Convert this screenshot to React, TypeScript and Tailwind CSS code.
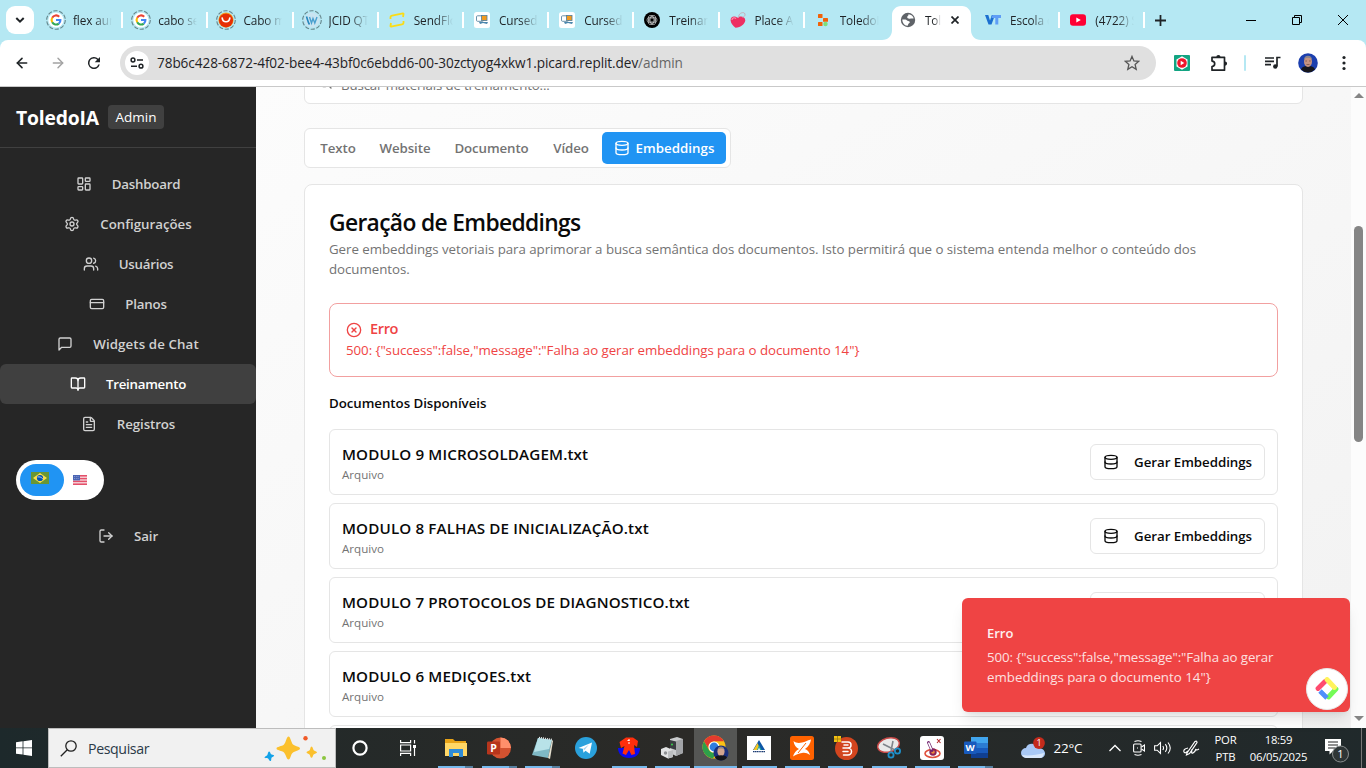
import React from "react";
import {
  LayoutDashboard, Settings, Users, CreditCard, BookOpen, FileText, LogOut, Database, CircleX, Search,
  ArrowLeft, ArrowRight,
} from "lucide-react";

type IconProps = { className?: string };

/* ---------- favicons ---------- */

function Ring({ children }: { children: React.ReactNode }) {
  return (
    <svg viewBox="0 0 20 20" className="h-5 w-5">
      <circle cx="10" cy="10" r="9.3" fill="none" stroke="#66868c" strokeWidth="1.1" strokeDasharray="4.2 1.64" />
      {children}
    </svg>
  );
}

function GoogleIcon() {
  return (
    <Ring>
      <circle cx="10" cy="10" r="7.6" fill="#fff" />
      <g fill="none" strokeWidth="2.1">
        <path d="M13.2 6.7A4.4 4.4 0 0 0 6.2 7.8" stroke="#ea4335" />
        <path d="M6.2 7.8a4.4 4.4 0 0 0 0 4.4" stroke="#fbbc05" />
        <path d="M6.2 12.2a4.4 4.4 0 0 0 6.6 1.4" stroke="#34a853" />
        <path d="M12.8 13.6A4.4 4.4 0 0 0 14.4 10H10" stroke="#4285f4" />
      </g>
    </Ring>
  );
}

function AliIcon() {
  return (
    <Ring>
      <circle cx="10" cy="10" r="7.6" fill="#f5a623" />
      <circle cx="10" cy="10.4" r="7" fill="#e62e04" />
      <path d="M6.2 8c.6 5 7 5 7.600 0" fill="none" stroke="#fff" strokeWidth="1.700" strokeLinecap="round" />
    </Ring>
  );
}

function WpIcon() {
  return (
    <Ring>
      <circle cx="10" cy="10" r="7.500" fill="#c9e4f1" />
      <path d="M4.500 6.500c1 3 1.500 6 3 8" fill="none" stroke="#2387bd" strokeWidth="1.600" />
      <path d="M7.500 7l2 6 1.500-4.500 1.800 4.500L15 7" fill="none" stroke="#4aa0cf" strokeWidth="1.400" />
    </Ring>
  );
}

function SendIcon() {
  return (
    <svg viewBox="0 0 18 18" className="h-[18px] w-[18px]">
      <path d="M2.500 8V6q0-1 1.500-1.300L15 2.300q.7 0 .5 1L15 6M15.500 10v2q0 1-1.500 1.300L3 15.700q-.7 0-.5-1L3 12" fill="none" stroke="#fbdc15" strokeWidth="1.800" strokeLinejoin="round" />
    </svg>
  );
}

function CursedIcon() {
  return (
    <svg viewBox="0 0 16 16" className="h-4 w-4">
      <rect width="16" height="16" rx="2.5" fill="#fff" />
      <rect x="2.500" y="3.800" width="7" height="5.500" rx="1" fill="#fff" stroke="#5a86a3" strokeWidth=".9" />
      <rect x="7.500" y="3.500" width="5.500" height="5" fill="#f29a1f" stroke="#4f7d9c" strokeWidth=".8" />
      <path d="M5 10h9l-1 2-4-1-3 1z" fill="#4b86ad" />
    </svg>
  );
}

function GptIcon() {
  return (
    <svg viewBox="0 0 16 16" className="h-4 w-4">
      <circle cx="8" cy="8" r="8" fill="#000" />
      <g fill="none" stroke="#fff" strokeWidth=".55">
        <ellipse cx="8" cy="8" rx="5" ry="2.900" />
        <ellipse cx="8" cy="8" rx="5" ry="2.900" transform="rotate(60 8 8)" />
        <ellipse cx="8" cy="8" rx="5" ry="2.900" transform="rotate(120 8 8)" />
        <path d="M8 5.800l2 1.100v2.200l-2 1.100-2-1.100V6.900z" />
      </g>
    </svg>
  );
}

function HeartIcon() {
  return (
    <svg viewBox="0 0 16 16" className="h-4 w-4">
      <path d="M.6 8.500C.3 4.500 4.500 3.200 7.500 5.800c2.500-2.300 8-1.300 7.800 2.700C14.800 12 11 15.500 5.500 15.800 3 14 1 11.500.6 8.500z" fill="#ee2f62" />
      <path d="M2 8c0-2 2-3 4-1.500" fill="none" stroke="#ff90ad" strokeWidth="1.200" />
      <path d="M8.500 6C8 1 14-1 15 2c.5 2-1.500 3-2.500 3.500" fill="none" stroke="#c9a5b3" strokeWidth=".9" />
    </svg>
  );
}

function ToledoIcon() {
  return (
    <svg viewBox="0 0 16 16" className="h-4 w-4">
      <g fill="#f26207">
        <rect x="3" y="2" width="4.500" height="4" rx=".6" />
        <rect x="8" y="6" width="5" height="3.800" rx=".6" />
        <rect x="3" y="10" width="4.500" height="4" rx=".6" />
      </g>
      <circle cx="10.500" cy="12" r="2.200" fill="#7ce07c" />
    </svg>
  );
}

function GlobeIcon() {
  return (
    <svg viewBox="0 0 16 16" className="h-4 w-4">
      <circle cx="8" cy="8" r="7.200" fill="#5f6368" />
      <path d="M2.300 7.500h3c1.500 0 1.500 1.500 3 1.500 2 .2 2 1.800.5 2.500-1 .5-.5 2-1.500 2.300-3-.3-5-3-5-6.300zM8.500 2.200c2.800.2 4.500 1.800 5.200 4-1 .8-2 0-3 .3C9 7 7 6.500 7.200 5c.2-1.200 1.500-1.300 1.300-2.800z" fill="#fff" />
    </svg>
  );
}

function VtIcon() {
  return (
    <svg viewBox="0 0 16 16" className="h-4 w-4">
      <path d="M0 3h3.300L5 8.500 6.800 3H10L6.500 12.500H3.500z" fill="#1b6fd0" />
      <path d="M7.500 3H16v3h-2.700v6.500h-3V6H6.400z" fill="#5f9df5" />
    </svg>
  );
}

function YoutubeIcon() {
  return (
    <svg viewBox="0 0 16 16" className="h-4 w-4">
      <rect y="2.200" width="16" height="11.600" rx="3" fill="#ff0033" />
      <path d="M6.300 5.400v5.200L10.800 8z" fill="#fff" />
    </svg>
  );
}

/* ---------- browser chrome ---------- */

type Tab = { label: string; icon: React.ReactNode; sep?: boolean; active?: boolean };

const tabs: Tab[] = [
  { label: "flex aurora", icon: <GoogleIcon />, sep: true },
  { label: "cabo serial", icon: <GoogleIcon />, sep: true },
  { label: "Cabo micro", icon: <AliIcon />, sep: true },
  { label: "JCID QT30", icon: <WpIcon />, sep: true },
  { label: "SendFlow", icon: <SendIcon />, sep: true },
  { label: "Curseduca", icon: <CursedIcon />, sep: true },
  { label: "Curseduca", icon: <CursedIcon />, sep: true },
  { label: "Treinamento", icon: <GptIcon />, sep: true },
  { label: "Place An", icon: <HeartIcon />, sep: true },
  { label: "ToledoIA", icon: <ToledoIcon /> },
  { label: "ToledoIA", icon: <GlobeIcon />, active: true },
  { label: "Escola de", icon: <VtIcon />, sep: true },
  { label: "(4722) Se", icon: <YoutubeIcon />, sep: true },
];

function TabItem({ tab }: { tab: Tab }) {
  return (
    <div className="relative flex h-10 w-[85.2px] shrink-0 items-center">
      {tab.active && (
        <svg viewBox="0 0 99 34" className="absolute -left-[8px] top-[6px] h-[34px] w-[99px]">
          <path d="M0 34c6 0 10-4 10-10V9c0-5 4-9 9-9h61c5 0 9 4 9 9v15c0 6 4 10 10 10z" fill="#fff" />
        </svg>
      )}
      <span className="relative ml-[6px] flex w-6 shrink-0 items-center justify-center">{tab.icon}</span>
      <span
        className={
          "relative ml-[5px] mt-px overflow-hidden whitespace-nowrap text-[11.8px] tracking-[-0.1px] text-[#1f2326] [mask-image:linear-gradient(to_right,#000_55%,transparent)] " +
          (tab.active ? "w-4" : "w-[39px]")
        }
      >
        {tab.label}
      </span>
      {tab.active && (
        <svg viewBox="0 0 8 8" className="relative ml-[10px] h-2 w-2">
          <path d="M.5.5l7 7M7.500.5l-7 7" stroke="#1f2326" strokeWidth="1.700" />
        </svg>
      )}
      {tab.sep && <span className="absolute right-0 top-3 h-4 w-[2px] bg-white" />}
    </div>
  );
}

function TabStrip() {
  return (
    <div className="flex h-10 shrink-0 items-center bg-[#b5e8f3]">
      <div className="ml-[6px] mr-1 flex h-7 w-7 items-center justify-center rounded-[9px] bg-white">
        <svg viewBox="0 0 10 6" className="h-[6px] w-[10px]">
          <path d="M1.300 1L5 4.600 8.700 1" fill="none" stroke="#1f2326" strokeWidth="2" />
        </svg>
      </div>
      {tabs.map((t, i) => (
        <TabItem key={i} tab={t} />
      ))}
      <svg viewBox="0 0 10 10" className="ml-[10px] h-[11px] w-[11px]">
        <path d="M5 0v10M0 5h10" stroke="#1f2326" strokeWidth="1.600" />
      </svg>
      <div className="ml-auto flex">
        <span className="flex w-[46px] items-center justify-center">
          <svg viewBox="0 0 10 10" className="h-[10px] w-[10px]"><path d="M0 5.500h10" stroke="#000" /></svg>
        </span>
        <span className="flex w-[46px] items-center justify-center">
          <svg viewBox="0 0 10 10" className="h-[10px] w-[10px]"><path d="M.5 2.500h7v7h-7zM2.500 2.500v-2h7v7h-2" fill="none" stroke="#000" /></svg>
        </span>
        <span className="flex w-[46px] items-center justify-center">
          <svg viewBox="0 0 10 10" className="h-[10px] w-[10px]"><path d="M0 0l10 10M10 0L0 10" stroke="#000" /></svg>
        </span>
      </div>
    </div>
  );
}

function Toolbar() {
  return (
    <div className="bg-[#b5e8f3]">
      <div className="flex h-[47px] items-center rounded-t-[8px] border-b border-[#c9c9c9] bg-white">
        <ArrowLeft className="ml-[14px] h-4 w-4 text-[#1f2326]" strokeWidth={2.4} />
        <ArrowRight className="ml-5 h-4 w-4 text-[#a3a3a3]" strokeWidth={2.2} />
        <svg viewBox="0 0 24 24" className="ml-[19px] h-[18px] w-[18px]">
          <path d="M17.650 6.350A8 8 0 1 0 19.730 14h-2.080A6 6 0 1 1 12 6c1.660 0 3.140.69 4.220 1.780L13 11h7V4z" fill="#1f2326" />
        </svg>
        <div className="ml-[17px] flex h-[34px] w-[1036px] items-center rounded-full bg-[#e0e0e0] pl-[5px]">
          <span className="flex h-6 w-6 items-center justify-center rounded-full bg-white">
            <svg viewBox="0 0 14 12" className="h-3 w-[14px]" fill="none" stroke="#1f2326" strokeWidth="1.500">
              <circle cx="3" cy="3" r="1.900" />
              <path d="M7 3h6M1 9.200h6" />
              <circle cx="11" cy="9.200" r="1.900" />
            </svg>
          </span>
          <span className="ml-2 whitespace-nowrap text-[13.6px] leading-5 tracking-[-0.08px] text-[#1f2326]">
            78b6c428-6872-4f02-bee4-43bf0c6ebdd6-00-30zctyog4xkw1.picard.replit.dev<span className="text-[#666]">/admin</span>
          </span>
          <svg viewBox="0 0 16 16" className="ml-auto mr-4 h-4 w-4">
            <path d="M8 1.400l1.900 4.500 4.900.4-3.700 3.200 1.100 4.800L8 11.700l-4.200 2.600 1.100-4.800L1.200 6.300l4.900-.4z" fill="none" stroke="#555" strokeWidth="1.300" />
          </svg>
        </div>
        <svg viewBox="0 0 16 16" className="ml-[18px] h-4 w-4">
          <rect width="16" height="16" rx="1" fill="#12a482" />
          <path d="M8 1.300l5.500 3.200v7L8 14.700 2.500 11.500v-7z" fill="#fff" />
          <circle cx="8" cy="8" r="4.800" fill="#f0152c" />
          <path d="M6.700 5.700v4.600L10.300 8z" fill="#fff" />
        </svg>
        <svg viewBox="0 0 18 18" className="ml-5 h-[18px] w-[18px]">
          <path d="M2 3.300h12.500v12.900H2v-3.700c3.600-.3 3.600-5.100 0-5.400z" fill="none" stroke="#1f2326" strokeWidth="1.700" strokeLinejoin="round" />
          <path d="M6.300 3a2.100 2.100 0 0 1 4.200 0zM15 7.500a2.100 2.100 0 0 1 0 4.200z" fill="#1f2326" />
        </svg>
        <span className="ml-4 h-4 w-[2px] rounded bg-[#b5e8f3]" />
        <svg viewBox="0 0 16 14" className="ml-[19px] h-[14px] w-4" fill="none" stroke="#1f2326" strokeWidth="1.700">
          <path d="M0 2h9M0 5.300h9M0 8.600h6M12 10.500V1.500h3.500" />
          <circle cx="10.300" cy="10.500" r="2.200" fill="#1f2326" stroke="none" />
        </svg>
        <svg viewBox="0 0 20 20" className="ml-[17px] h-5 w-5">
          <circle cx="10" cy="10" r="9.800" fill="#1c3fae" />
          <path d="M3 16.500c1-3 4-3.500 7-3.500s6 .5 7 3.500a9.800 9.800 0 0 1-14 0z" fill="#16161c" />
          <ellipse cx="10" cy="8.500" rx="4" ry="5.400" fill="#c69380" />
          <path d="M5.800 7C5.800 1.300 14.200 1.300 14.200 7 13 4 7 4 5.800 7z" fill="#8b858c" />
          <path d="M7.300 8h1.700M11 8h1.700M8.500 11.500h3" stroke="#6b4a42" strokeWidth=".7" />
        </svg>
        <svg viewBox="0 0 4 16" className="ml-6 h-4 w-1" fill="#1f2326">
          <circle cx="2" cy="2.500" r="1.600" /><circle cx="2" cy="8" r="1.600" /><circle cx="2" cy="13.500" r="1.600" />
        </svg>
      </div>
    </div>
  );
}

/* ---------- sidebar ---------- */

function MessageIcon({ className }: IconProps) {
  return (
    <svg viewBox="0 0 24 24" className={className} fill="none" stroke="currentColor" strokeWidth="2" strokeLinecap="round" strokeLinejoin="round">
      <path d="M21 15a2 2 0 0 1-2 2H7l-4 4V5a2 2 0 0 1 2-2h14a2 2 0 0 1 2 2z" />
    </svg>
  );
}

type Nav = { label: string; Icon: React.ComponentType<IconProps>; tracking: string; active?: boolean };

const navItems: Nav[] = [
  { label: "Dashboard", Icon: LayoutDashboard, tracking: "tracking-[-0.2px]" },
  { label: "Configurações", Icon: Settings, tracking: "tracking-[-0.02px]" },
  { label: "Usuários", Icon: Users, tracking: "tracking-[-0.25px]" },
  { label: "Planos", Icon: CreditCard, tracking: "tracking-[-0.2px]" },
  { label: "Widgets de Chat", Icon: MessageIcon, tracking: "tracking-[0.1px]" },
  { label: "Treinamento", Icon: BookOpen, tracking: "tracking-[-0.25px]", active: true },
  { label: "Registros", Icon: FileText, tracking: "tracking-[-0.1px]" },
];

function NavItem({ label, Icon, tracking, active }: Nav) {
  return (
    <div
      className={
        "flex h-10 items-center justify-center gap-5 rounded-md text-[13.3px] font-semibold " +
        (active ? "bg-[#404040] text-white" : "text-[#d1d1d1]")
      }
    >
      <Icon className="h-4 w-4" />
      <span className={"whitespace-nowrap pt-px " + tracking}>{label}</span>
    </div>
  );
}

function Sidebar() {
  return (
    <aside className="flex w-64 shrink-0 flex-col bg-[#262626]">
      <div className="flex h-[61px] items-center border-b border-[#404040] pl-4">
        <span className="w-[92px] pt-px text-[19.300px] font-bold leading-7 tracking-[-0.15px] text-white">ToledoIA</span>
        <span className="flex h-6 w-14 items-center justify-center rounded bg-[#404040] pt-px text-[13.5px] text-white">Admin</span>
      </div>
      <nav className="mt-4">
        {navItems.map((n) => (
          <NavItem key={n.label} {...n} />
        ))}
      </nav>
      <div className="ml-4 mt-4 flex h-10 w-[88px] items-center rounded-full bg-white p-1">
        <span className="flex h-8 w-11 items-start justify-center rounded-full bg-[#2094f3] pr-1 pt-2">
          <svg viewBox="0 0 18 12" className="h-3 w-[18px]">
            <rect width="18" height="12" fill="#699635" />
            <path d="M9 1l7 5-7 5-7-5z" fill="#ffe04b" />
            <circle cx="9" cy="6" r="3.100" fill="#0052b4" />
            <path d="M6.500 5c2-.5 4 .2 5.200 1.800" fill="none" stroke="#f0f0f0" strokeWidth=".8" />
          </svg>
        </span>
        <svg viewBox="0 0 14 10" className="ml-[9px] h-[10px] w-[14px]">
          <rect width="14" height="10" fill="#f4c9d0" />
          <path d="M0 .8h14M0 3.600h14M0 6.400h14M0 9.200h14" stroke="#e4506a" strokeWidth="1.400" />
          <rect width="7" height="5.400" fill="#4a64b4" />
          <path d="M1 1.500h5M1 3.500h5" stroke="#9badd8" strokeWidth=".7" strokeDasharray="1 .8" />
        </svg>
      </div>
      <div className="mt-4">
        <NavItem label="Sair" Icon={LogOut} tracking="tracking-[-0.1px]" />
      </div>
    </aside>
  );
}

/* ---------- page ---------- */

const documents = [
  "MODULO 9 MICROSOLDAGEM.txt",
  "MODULO 8 FALHAS DE INICIALIZAÇÃO.txt",
  "MODULO 7 PROTOCOLOS DE DIAGNOSTICO.txt",
  "MODULO 6 MEDIÇOES.txt",
  "MODULO 5 ELETRONICA.txt",
];

const errorMessage = '500: {"success":false,"message":"Falha ao gerar embeddings para o documento 14"}';

function DocumentRow({ name }: { name: string }) {
  return (
    <div className="flex h-[66px] shrink-0 items-center justify-between rounded-md border border-[#e5e5e5] px-3">
      <div>
        <div className="text-[15.2px] font-semibold leading-6 tracking-[0.13px] text-[#0a0a0a]">{name}</div>
        <div className="pt-px text-[11.6px] leading-[15px] text-[#737373]">Arquivo</div>
      </div>
      <div className="flex h-9 w-[175px] items-center justify-between rounded-md border border-[#e5e5e5] px-3 text-[13.3px] font-semibold tracking-[-0.04px] text-[#0a0a0a]">
        <Database className="h-4 w-4" />
        <span className="whitespace-nowrap pt-px">Gerar Embeddings</span>
      </div>
    </div>
  );
}

function Main() {
  return (
    <main className="flex min-w-0 flex-1 flex-col overflow-hidden bg-linear-to-br from-[#fcfcfc] to-[#f2f2f2] pl-12 pr-12">
      <div className="-mt-[23px] flex h-10 w-[999px] shrink-0 items-center gap-2 rounded-md border border-[#e5e5e5] bg-white pl-3 text-[13.300px] text-[#737373]">
        <Search className="mb-1 h-4 w-4" />
        <span className="pt-[3px] tracking-[-0.15px]">Buscar materiais de treinamento...</span>
      </div>
      <div className="mt-6 flex h-10 w-[427px] shrink-0 items-center rounded-md border border-[#e5e5e5] bg-white p-[3px] text-[13.300px] font-semibold tracking-[-0.1px] text-[#737373]">
        <span className="w-[60px] pt-px text-center">Texto</span>
        <span className="w-[74px] pt-px text-center">Website</span>
        <span className="w-[99px] pt-px text-center">Documento</span>
        <span className="w-[60px] pt-px text-center">Vídeo</span>
        <span className="ml-px flex h-8 w-[124px] items-center justify-center gap-[6px] whitespace-nowrap rounded-[5px] bg-[#2094f3] text-white">
          <Database className="h-4 w-4" />
          <span className="pt-px tracking-[0.02px]">Embeddings</span>
        </span>
      </div>
      <section className="mt-4 flex w-[999px] shrink-0 flex-col rounded-lg border border-[#e5e5e5] bg-white p-6">
        <h1 className="h-[30px] whitespace-nowrap text-[22.800px] font-semibold leading-[27px] tracking-[-0.65px] text-[#0a0a0a]">Geração de Embeddings</h1>
        <p className="w-[900px] text-[13.3px] leading-5 tracking-[-0.045px] text-[#737373]">
          Gere embeddings vetoriais para aprimorar a busca semântica dos documentos. Isto permitirá que o sistema entenda melhor o conteúdo dos
          <br />
          documentos.
        </p>
        <div className="mt-6 flex h-[74px] flex-col rounded-lg border border-[#f2a0a0] px-4 pt-[15px] text-[#ef4444]">
          <div className="flex h-5 items-center gap-2 text-[14.600px] font-semibold tracking-[-0.4px]">
            <CircleX className="mt-[2px] h-4 w-4" />
            <span className="-mt-px">Erro</span>
          </div>
          <div className="mt-px text-[13.300px] leading-5 tracking-[-0.06px]">{errorMessage}</div>
        </div>
        <h2 className="mt-4 text-[13.3px] font-semibold leading-5 tracking-[-0.05px] text-[#0a0a0a]">Documentos Disponíveis</h2>
        <div className="mt-4 flex flex-col gap-2">
          {documents.map((d) => (
            <DocumentRow key={d} name={d} />
          ))}
        </div>
      </section>
    </main>
  );
}

function Scrollbar() {
  return (
    <div className="flex w-[15px] shrink-0 flex-col items-center bg-[#fcfcfc]">
      <svg viewBox="0 0 10 5" className="mt-[6px] h-[5px] w-[10px]"><path d="M5 0l5 5H0z" fill="#858585" /></svg>
      <div className="mt-[128px] h-[216px] w-[9px] rounded-full bg-[#858585]" />
      <svg viewBox="0 0 10 5" className="mb-[7px] mt-auto h-[5px] w-[10px]"><path d="M0 0h10L5 5z" fill="#858585" /></svg>
    </div>
  );
}

function Toast() {
  return (
    <div className="absolute left-[962px] top-[598px] h-[114px] w-[388px] rounded-md bg-[#ef4444] px-[25px] pt-[25px] text-[13.3px] leading-5 text-[#fef0f0] shadow-lg">
      <div className="text-[13px] font-semibold">Erro</div>
      <div className="mt-1 text-[#fde0e0]">
        <span className="tracking-[-0.1px]">{'500: {"success":false,"message":"Falha ao gerar'}</span>
        <br />
        <span>{'embeddings para o documento 14"}'}</span>
      </div>
      <div className="absolute left-[344px] top-[70px] flex h-[42px] w-[42px] items-center justify-center rounded-full border border-[#e8e8e8] bg-white">
        <svg viewBox="0 0 24 24" className="h-6 w-6" fill="none" strokeWidth="4.800" strokeLinecap="round">
          <path d="M10 4.500L3 11.500" stroke="#ff4b6e" />
          <path d="M21 12l-7.500 8" stroke="#74fb57" />
          <path d="M5 14l7 7" stroke="#4f8ffb" strokeLinecap="butt" />
          <path d="M12 2.500l7.500 8" stroke="#fff35c" />
          <path d="M12 7l5 5-5 5-5-5z" fill="#fff" stroke="none" />
        </svg>
      </div>
    </div>
  );
}

/* ---------- taskbar ---------- */

function App32({ children }: { children: React.ReactNode }) {
  return <svg viewBox="0 0 24 24" className="h-6 w-6">{children}</svg>;
}

const apps: { icon: React.ReactNode; line?: boolean; multi?: boolean; active?: boolean }[] = [
  {
    line: true, multi: true,
    icon: <App32><path d="M1 3h8l2 2h11v15H1z" fill="#e8a317" /><path d="M1 7h22v13H1z" fill="#ffd766" /><path d="M5 13h14v8h-4v-4H9v4H5z" fill="#2f8bd6" /></App32>,
  },
  {
    line: true, multi: true,
    icon: <App32><circle cx="13.500" cy="12" r="10.500" fill="#d35230" /><path d="M13.500 1.500A10.500 10.500 0 0 1 24 12H13.500z" fill="#ff8f6b" /><rect y="5.500" width="13" height="13" rx="1.200" fill="#b7351c" /><text x="6.500" y="15.500" textAnchor="middle" fontSize="10.500" fontWeight="700" fill="#fff">P</text></App32>,
  },
  {
    line: true, multi: true,
    icon: <App32><path d="M8 2l14 2-4 18L2 19z" fill="#7fb9c6" /><path d="M8 2l14 2-3 9L4 16z" fill="#b8e2e8" /><path d="M22 4l1 1-3 18-2-1z" fill="#e4e0cf" /><path d="M9 1.500l13 2" stroke="#eee" strokeWidth="1.500" strokeDasharray="1 1" /></App32>,
  },
  {
    icon: <App32><circle cx="12" cy="12" r="11" fill="#2aa1dc" /><path d="M4.500 12L18 6.500l-2.300 11.300-4.200-3-2 2-.7-4z" fill="#fff" /><path d="M9 13l6-4.500-4.500 5.500z" fill="#a9d4ee" /></App32>,
  },
  {
    line: true,
    icon: <App32><path d="M1 12h22c0 6-4 10-11 10S1 18 1 12z" fill="#0b0bf0" /><path d="M9 1.500h7l5 3.500-1 6-3-2 1 9-3.500 1-2.500-5-3 5-3.500-1.500L7.500 10 4 12 2.500 6z" fill="#ff2e0c" /><path d="M12 3v6M10.500 4.500h3" stroke="#fff" strokeWidth="1" strokeDasharray="2 1" /></App32>,
  },
  {
    line: true,
    icon: <App32><path d="M10 3l7-2 6 2v14l-7 3-6-3z" fill="#c9cbcd" /><path d="M16 5l7-2v14l-7 3z" fill="#a2a4a7" /><path d="M10 4l6 1.500V14l-6-2z" fill="#3a3d42" /><circle cx="12" cy="8.500" r="1" fill="#38d24a" /><path d="M1 13l5-2 7 3v7l-5 1.500L1 19z" fill="#e2e3e4" /><circle cx="5.500" cy="17" r="1.700" fill="#8d8f92" /><path d="M8 15.500l5-1.500v7l-5 1.500z" fill="#bcbec0" /></App32>,
  },
  {
    line: true, active: true,
    icon: (
      <svg viewBox="0 0 27 26" className="h-[26px] w-[27px]">
        <circle cx="12" cy="12" r="11.500" fill="#fbc116" />
        <path d="M12 .5A11.500 11.500 0 0 1 22 6.300H12A6 6 0 0 0 6.500 14L2 6.300A11.500 11.500 0 0 1 12 .5z" fill="#e33b2e" />
        <path d="M2 6.300l5 8.700c1 2 4 3.500 7 2.500L11 23.500A11.500 11.500 0 0 1 2 6.300z" fill="#2da04a" />
        <circle cx="12" cy="12" r="5.500" fill="#fff" /><circle cx="12" cy="12" r="4.400" fill="#2f7de0" />
        <circle cx="19" cy="18" r="7.500" fill="#1b2f7c" /><ellipse cx="19" cy="16.500" rx="3.600" ry="4.800" fill="#d3a58e" />
        <path d="M13 22.500c1-3 11-3 12 0a7.500 7.500 0 0 1-12 0z" fill="#15161b" /><path d="M15.600 15c0-4.500 6.800-4.500 6.800 0-1-2-5.500-2-6.800 0z" fill="#8a848a" />
      </svg>
    ),
  },
  {
    line: true,
    icon: <App32><rect width="24" height="24" fill="#fff" /><path d="M12 4l6 10H6z" fill="#0d56a6" /><path d="M10.500 7l3 7H6.500z" fill="#f7c51f" /><path d="M12 9l2.500 5H10z" fill="#22a7a0" /><path d="M12 11.500l1 2.500h-2z" fill="#fff" /><path d="M6 15.700h12" stroke="#1b3b72" strokeWidth="1.300" strokeDasharray="1.400 .4" /></App32>,
  },
  {
    line: true,
    icon: <App32><rect width="24" height="24" rx="2.500" fill="#ff6200" /><path d="M3.500 5c3 2.500 6 2 8.500 1.500 3-.5 5-2 9-3-.5 4-2.500 7-6 9.500 3 1 4.500 3.500 5 6-3-2-5-2.500-8-2-3.500.5-6 1.500-9 3.500 1-3.500 3-6 6-7.500C6 11.500 4 9 3.500 5z" fill="#fff" /><path d="M16 7l-8 10" stroke="#ff6200" strokeWidth="1" /></App32>,
  },
  {
    line: true,
    icon: <App32><circle cx="12.500" cy="12.500" r="11.500" fill="#d2451e" /><path d="M8 6h6a3 3 0 0 1 0 6H9M14 12a3 3 0 0 1 0 7H9.500M10 9h4M9 15.500h5" fill="none" stroke="#fff" strokeWidth="1.500" strokeLinecap="round" /><path d="M0 0h7v6H0z" fill="#f5c211" /><path d="M3.500 0v6M0 3h7" stroke="#9a7a10" strokeWidth=".8" /></App32>,
  },
  {
    line: true,
    icon: <App32><ellipse cx="11.500" cy="9" rx="11" ry="7" fill="#e9e9e9" stroke="#c94a48" strokeWidth="1.500" transform="rotate(-15 11.500 9)" /><path d="M6 8l12 6M16 5l-2 10" stroke="#80858b" strokeWidth="1.600" /><circle cx="14" cy="19" r="2.600" fill="none" stroke="#1f8fc9" strokeWidth="1.800" /><circle cx="20.500" cy="15" r="2.600" fill="none" stroke="#1f8fc9" strokeWidth="1.800" /></App32>,
  },
  {
    line: true,
    icon: <App32><rect width="24" height="24" rx="3" fill="#fff" /><ellipse cx="12.500" cy="17.500" rx="7.500" ry="4" fill="none" stroke="#e0503c" strokeWidth="1.600" /><circle cx="13" cy="16" r="3.700" fill="#8a2358" /><circle cx="13" cy="16" r="1.800" fill="#f08a3c" /><path d="M8.500 6.500l3.500 8" stroke="#70206d" strokeWidth="3" strokeLinecap="round" /><path d="M8.500 6.500l3 7" stroke="#fff" strokeWidth="1.600" /><path d="M17 3l3.500 4M20.500 3L17 7" stroke="#b3262a" strokeWidth="1.100" /></App32>,
  },
  {
    line: true, multi: true,
    icon: <App32><path d="M7 1h17v6H7z" fill="#41a5ee" /><path d="M7 7h17v5H7z" fill="#2b7cd3" /><path d="M7 12h17v5H7z" fill="#185abd" /><path d="M7 17h17v5H7z" fill="#103f91" /><rect y="5.500" width="12.500" height="12.500" rx="1" fill="#185abd" /><text x="6.200" y="15.300" textAnchor="middle" fontSize="9.500" fontWeight="700" fill="#fff">W</text></App32>,
  },
];

function Taskbar() {
  return (
    <footer className="flex h-10 shrink-0 bg-linear-to-r from-[#1d292b] via-[#2b2a27] to-[#20292b] text-white">
      <div className="flex w-12 items-center justify-center">
        <svg viewBox="0 0 16 16" className="h-4 w-4" fill="#fff">
          <path d="M0 2.200l6.600-.9v6.200H0zM7.400 1.200L16 0v7.500H7.400zM0 8.300h6.600v6.300L0 13.700zM7.400 8.300H16V16l-8.600-1.200z" />
        </svg>
      </div>
      <div className="flex w-72 items-center border border-[#bdbdbd] bg-[#f1f1f1] pl-[11px]">
        <svg viewBox="0 0 17 17" className="h-[17px] w-[17px]" fill="none" stroke="#222" strokeWidth="1.300">
          <circle cx="11" cy="6" r="5.200" /><path d="M7.300 9.700L.8 16.200" />
        </svg>
        <span className="ml-[11px] pt-px text-[14.200px] tracking-[-0.4px] text-[#2b3a48]">Pesquisar</span>
        <svg viewBox="0 0 62 26" className="ml-auto mr-[9px] h-[26px] w-[62px]">
          <path d="M24.500 1.500c2 0 2.800 6.500 4.500 8s7 2.200 7 4-5.500 2.500-7.500 4.500-2 6.500-4 6.500-2.500-5-4.500-7-7.500-2-7.500-4 5.500-2 7.500-4 2.500-8 4.500-8z" fill="#fbc02d" />
          <path d="M47.500 11.500c1.200 0 1.500 3 2.200 3.700s3.300 1.300 3.300 2.200-2.700 1.300-3.400 2-1 3.300-2.100 3.300-1.300-2.600-2-3.300-3-1.100-3-2 2.400-1.400 3.100-2.100.8-3.800 1.900-3.800z" fill="#fbc02d" />
          <path d="M5 16.500c1 0 1.500 2 2 2.700l3 1c.8.8-1.500 1.500-2.300 2.300s0 3.500-1.200 3.500-1.800-2-2.500-2.500-3.500 0-3.500-1 2-1.500 2.700-2.300.8-3.700 1.800-3.700z" fill="#13a2e8" />
          <circle cx="41.500" cy="3.300" r="2.200" fill="#f05a28" /><circle cx="60" cy="23" r="2" fill="#8cc63f" />
        </svg>
      </div>
      <div className="flex w-12 items-center justify-center">
        <svg viewBox="0 0 16 16" className="h-4 w-4"><circle cx="8" cy="8" r="6.600" fill="none" stroke="#fff" strokeWidth="2.200" /></svg>
      </div>
      <div className="mr-[2px] flex w-12 items-center justify-center">
        <svg viewBox="0 0 16 16" className="h-4 w-4" fill="none" stroke="#fff" strokeWidth="1.200">
          <path d="M.6 0v2.600h10V0M.6 16v-2.600h10V16M.6 5h10v6H.6zM14.500 0v3.500M14.500 8v8" /><path d="M13 5h3v3h-3z" fill="#fff" stroke="none" />
        </svg>
      </div>
      {apps.map((a, i) => (
        <div key={i} className={"relative flex w-[43.35px] shrink-0 items-center justify-center " + (a.active ? "bg-[#555654]" : "")}>
          {a.icon}
          {a.line && (
            <span className={"absolute bottom-0 flex h-[2px] " + (a.active ? "w-full bg-[#76b9ed]" : "w-[35px] bg-[#76b9ed]")}>
              {a.multi && <span className="ml-auto h-full w-2 bg-[#567f9f]" />}
            </span>
          )}
        </div>
      ))}
      <div className="ml-6 flex w-[62px] shrink-0 items-center gap-2">
        <svg viewBox="0 0 24 22" className="h-[22px] w-6 shrink-0">
          <path d="M5 21a5 5 0 0 1 0-10c1-5 10-6 12 0 9 0 9 10 2 10z" fill="#a9c8f5" />
          <path d="M5 21a5 5 0 0 1-4-3c7 1 14 0 22-2-.5 3-2 5-4 5z" fill="#d9e7fb" />
          <circle cx="18" cy="6" r="5.900" fill="#c42b1c" />
          <text x="18" y="9.300" fontSize="9" textAnchor="middle" fill="#fff">1</text>
        </svg>
        <span className="text-[13.500px] tracking-[-0.2px]">22°C</span>
      </div>
      <div className="ml-[26px] flex shrink-0 items-center">
        <svg viewBox="0 0 12 8" className="h-2 w-3"><path d="M.5 7L6 1.500 11.500 7" fill="none" stroke="#fff" strokeWidth="1.300" /></svg>
        <svg viewBox="0 0 12 16" className="ml-3 h-4 w-3" fill="none" stroke="#fff" strokeWidth="1.100">
          <rect x=".6" y="4" width="7.500" height="8" rx="1" /><path d="M8.500 7l3-2v6l-3-2M1.500 1.500q3.500-1.500 7 0M1.500 14.500q3.500 1.500 7 0M4 8h1" />
        </svg>
        <svg viewBox="0 0 18 14" className="ml-[9px] h-[14px] w-[18px]" fill="none" stroke="#fff" strokeWidth="1.100">
          <path d="M.6 4.800h2.600L6.500 1.500v11L3.200 9.200H.6zM8.800 5q1.500 2 0 4M11.300 3.200q3 3.800 0 7.600M14 1.500q4.500 5.500 0 11" />
        </svg>
        <svg viewBox="0 0 17 17" className="ml-[11px] h-[17px] w-[17px]" fill="none" stroke="#fff" strokeWidth="1.200">
          <path d="M4 13L12 1.500q2-1 2 1L6.500 13.500 3.500 15zM5 8q-5 1-4 4 1 2 4-1M9 9q-1 5 1 4t3-4q0 2 3 0" />
        </svg>
      </div>
      <div className="ml-[13px] flex w-6 shrink-0 flex-col items-center pt-[3px] text-[11.300px] leading-[17px] tracking-[-0.2px]">
        <span>POR</span>
        <span>PTB</span>
      </div>
      <div className="ml-[10px] flex w-[62px] shrink-0 flex-col items-center whitespace-nowrap pt-[3px] text-[11.300px] leading-[17px] tracking-[-0.25px]">
        <span>18:59</span>
        <span>06/05/2025</span>
      </div>
      <div className="ml-auto mr-1 flex w-[38px] items-center border-r border-[#777] pt-1">
        <svg viewBox="0 0 26 26" className="h-[26px] w-[26px]">
          <path d="M1 2h16v12H9l-3.500 3.500V14H1z" fill="#fff" />
          <path d="M4 5h10M4 8h10M4 11h7" stroke="#222" strokeWidth="1.100" />
          <circle cx="16.500" cy="17" r="8" fill="#2e3536" stroke="#8a8e8f" />
          <text x="16.500" y="21" fontSize="11" textAnchor="middle" fill="#fff">1</text>
        </svg>
      </div>
    </footer>
  );
}

export default function App() {
  return (
    <div className="relative flex h-[768px] w-[1366px] flex-col overflow-hidden bg-white font-['Open_Sans','Noto_Sans',sans-serif]">
      <TabStrip />
      <Toolbar />
      <div className="flex min-h-0 flex-1">
        <Sidebar />
        <Main />
        <Scrollbar />
      </div>
      <Taskbar />
      <Toast />
    </div>
  );
}
